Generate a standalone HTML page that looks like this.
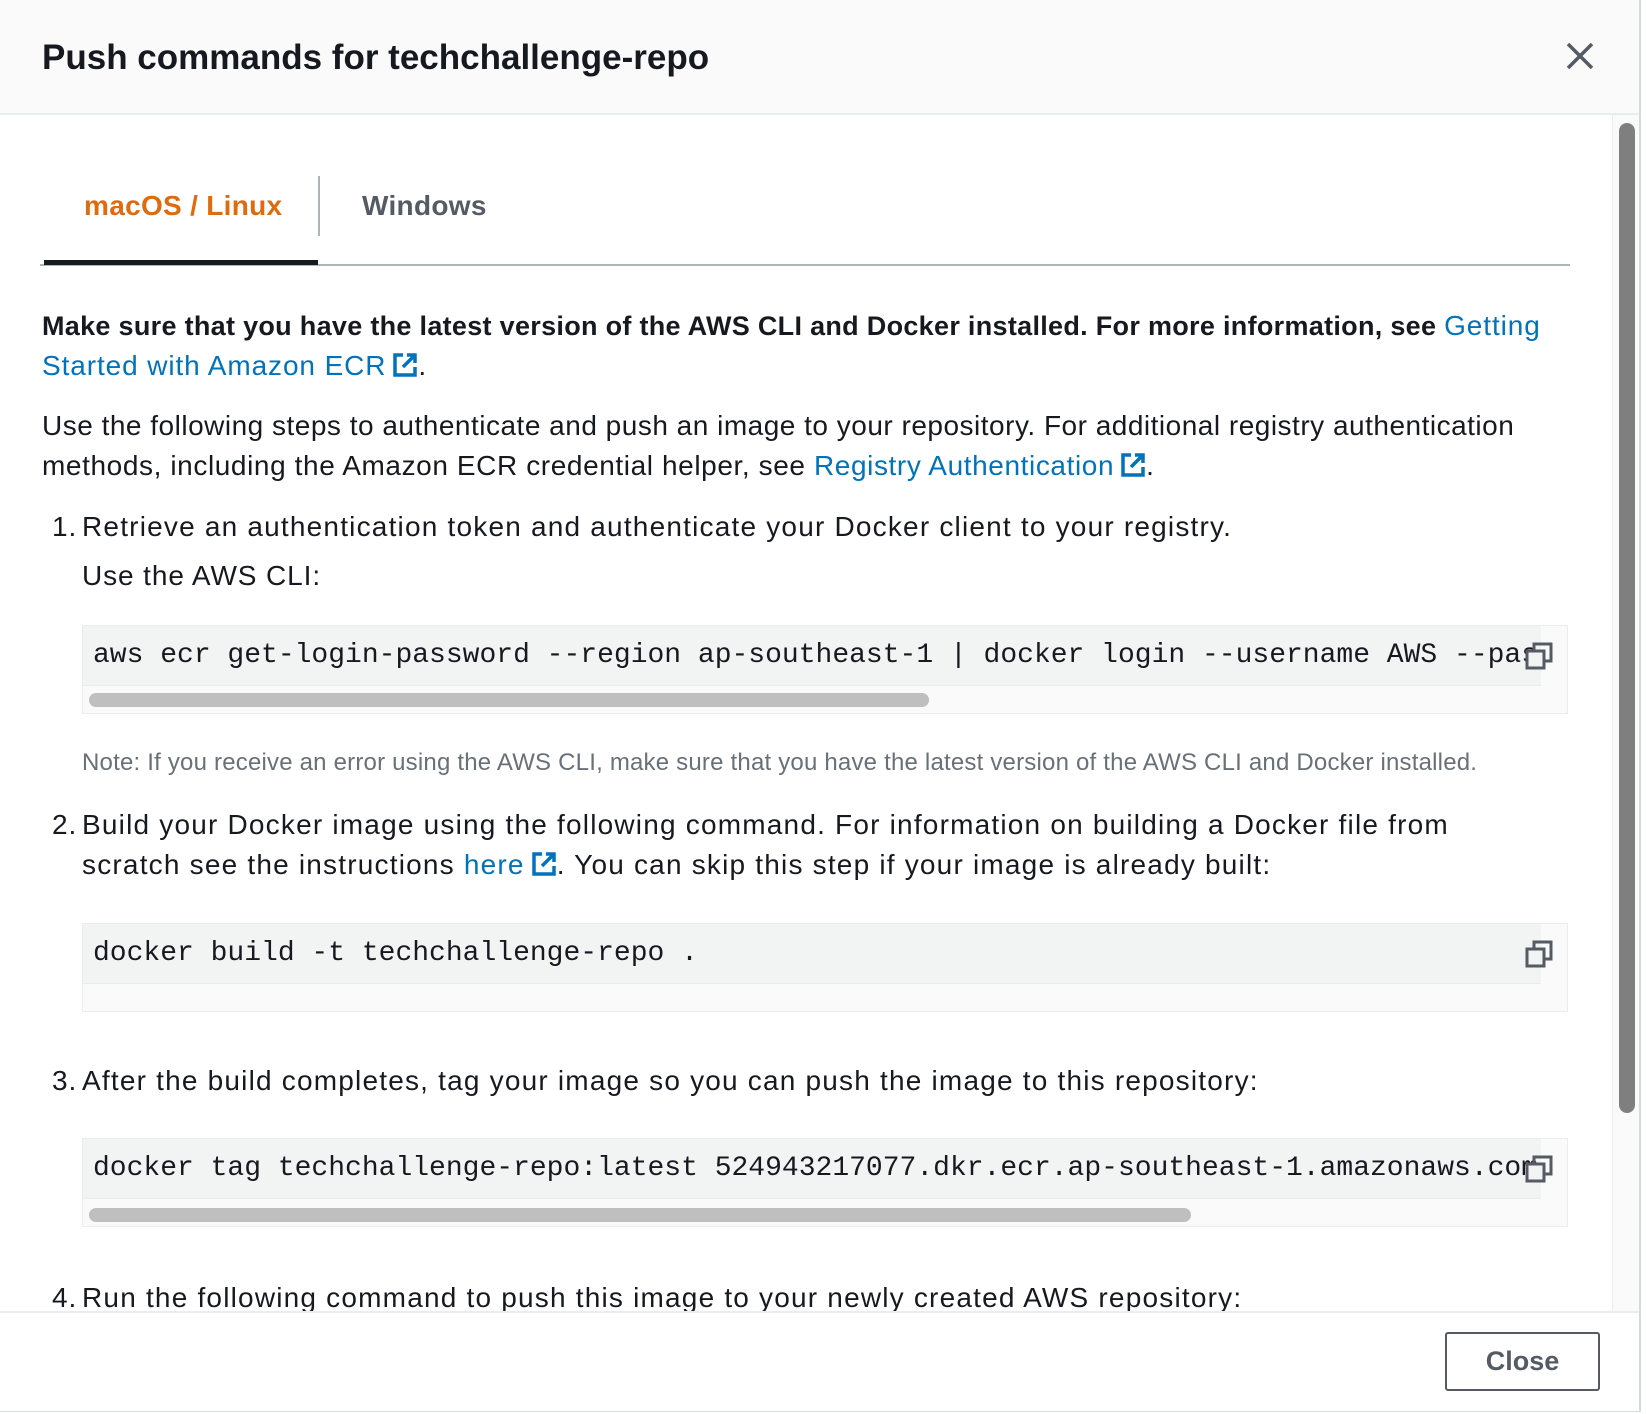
<!DOCTYPE html>
<html><head><meta charset="utf-8"><style>
*{margin:0;padding:0;box-sizing:border-box}
body{width:1646px;height:1414px;background:#fff;font-family:"Liberation Sans",Arial,sans-serif;color:#16191f;position:relative;overflow:hidden}
.modal{position:absolute;left:0;top:0;width:1641px;height:1412px;background:#fff;border-right:2px solid #d5dbdb;border-bottom:2px solid #d5dbdb}
.hdr{position:absolute;left:0;top:0;width:1639px;height:115px;background:#fafafa;border-bottom:2px solid #eaeded}
.t{position:absolute;white-space:nowrap;line-height:40px}
.title{left:42px;top:38px;font-size:35px;font-weight:bold}
.body{position:absolute;left:0;top:115px;width:1639px;height:1196px;overflow:hidden}
.body .t{font-size:28px;letter-spacing:0.9px}
.body .b{font-size:27px;letter-spacing:0.3px;font-weight:bold}
a{color:#0073bb;text-decoration:none}
.ext{display:inline-block;width:26px;height:26px;vertical-align:-3px;margin-left:6px}
.code{position:absolute;left:82px;width:1486px;background:#fafafa;border:1px solid #eaeded}
.code .in{position:absolute;left:0;top:0;width:1458px;height:60px;background:#f2f3f3;border-bottom:1px solid #eaeded;overflow:hidden}
.code .tx{position:absolute;left:10px;top:10px;font-family:"Liberation Mono","DejaVu Sans Mono",monospace;font-size:28px;line-height:40px;white-space:nowrap;color:#16191f}
.copy{position:absolute;left:1442px;top:16px;width:28px;height:28px}
.thumb{position:absolute;left:6px;height:14px;background:#bfbfbf;border-radius:7px}
.vs{position:absolute;left:1612px;top:115px;width:27px;height:1196px;background:#fafafa;border-left:1px solid #eaeded}
.vs div{position:absolute;left:6px;top:8px;width:16px;height:990px;background:#7f7f7f;border-radius:8px}
.ftr{position:absolute;left:0;top:1311px;width:1639px;height:100px;border-top:2px solid #eaeded;background:#fff}
.btn{position:absolute;left:1445px;top:19px;width:155px;height:59px;border:2px solid #545b64;border-radius:3px;font-weight:bold;font-size:27px;color:#545b64;text-align:center;line-height:55px}
</style></head><body>
<div class="modal">
<div class="hdr">
<div class="t title">Push commands for techchallenge-repo</div>
<svg style="position:absolute;left:1566px;top:42px" width="28" height="28" viewBox="0 0 28 28"><path d="M2 2L26 26M26 2L2 26" stroke="#545b64" stroke-width="3.5"/></svg>
</div>
<div class="body">
<div class="t b" style="left:84px;top:71px;font-size:28px;color:#dd6b10">macOS / Linux</div>
<div style="position:absolute;left:318px;top:61px;width:2px;height:60px;background:#aab7b8"></div>
<div class="t b" style="left:362px;top:71px;font-size:28px;color:#545b64">Windows</div>
<div style="position:absolute;left:40px;top:149px;width:1530px;height:2px;background:#aab7b8"></div>
<div style="position:absolute;left:44px;top:145px;width:274px;height:5px;background:#16191f"></div>

<div class="t b" style="left:42px;top:191px">Make sure that you have the latest version of the AWS CLI and Docker installed. For more information, see <a style="font-weight:normal;letter-spacing:0.9px;font-size:28px">Getting</a></div>
<div class="t" style="left:42px;top:231px"><a>Started with Amazon ECR<svg class="ext" viewBox="0 0 26 26"><path d="M11 3H3V23H23V15" fill="none" stroke="#0073bb" stroke-width="3.5"/><path d="M15 3H23V11M23 3L11 15" fill="none" stroke="#0073bb" stroke-width="3.5"/></svg></a>.</div>

<div class="t" style="left:42px;top:291px;letter-spacing:0.5px">Use the following steps to authenticate and push an image to your repository. For additional registry authentication</div>
<div class="t" style="left:42px;top:331px;letter-spacing:0.6px">methods, including the Amazon ECR credential helper, see <a>Registry Authentication<svg class="ext" viewBox="0 0 26 26"><path d="M11 3H3V23H23V15" fill="none" stroke="#0073bb" stroke-width="3.5"/><path d="M15 3H23V11M23 3L11 15" fill="none" stroke="#0073bb" stroke-width="3.5"/></svg></a>.</div>

<div class="t" style="left:52px;top:392px">1.</div>
<div class="t" style="left:82px;top:392px;letter-spacing:1.2px">Retrieve an authentication token and authenticate your Docker client to your registry.</div>
<div class="t" style="left:82px;top:441px">Use the AWS CLI:</div>
<div class="code" style="top:510px;height:89px"><div class="in"><div class="tx">aws ecr get-login-password --region ap-southeast-1 | docker login --username AWS --password-stdin</div></div>
<svg class="copy" viewBox="0 0 28 28"><rect x="9" y="2" width="17" height="17" fill="none" stroke="#545b64" stroke-width="3"/><rect x="2" y="9" width="17" height="17" fill="#f2f3f3" stroke="#545b64" stroke-width="3"/></svg>
<div class="thumb" style="top:67px;width:840px"></div></div>
<div class="t" style="left:82px;top:628px;font-size:24px;letter-spacing:0.2px;color:#687078">Note: If you receive an error using the AWS CLI, make sure that you have the latest version of the AWS CLI and Docker installed.</div>

<div class="t" style="left:52px;top:690px">2.</div>
<div class="t" style="left:82px;top:690px;letter-spacing:1.2px">Build your Docker image using the following command. For information on building a Docker file from</div>
<div class="t" style="left:82px;top:730px;letter-spacing:1.2px">scratch see the instructions <a>here<svg class="ext" viewBox="0 0 26 26"><path d="M11 3H3V23H23V15" fill="none" stroke="#0073bb" stroke-width="3.5"/><path d="M15 3H23V11M23 3L11 15" fill="none" stroke="#0073bb" stroke-width="3.5"/></svg></a>. You can skip this step if your image is already built:</div>
<div class="code" style="top:808px;height:89px"><div class="in"><div class="tx">docker build -t techchallenge-repo .</div></div>
<svg class="copy" viewBox="0 0 28 28"><rect x="9" y="2" width="17" height="17" fill="none" stroke="#545b64" stroke-width="3"/><rect x="2" y="9" width="17" height="17" fill="#f2f3f3" stroke="#545b64" stroke-width="3"/></svg></div>

<div class="t" style="left:52px;top:946px">3.</div>
<div class="t" style="left:82px;top:946px;letter-spacing:1.2px">After the build completes, tag your image so you can push the image to this repository:</div>
<div class="code" style="top:1023px;height:89px"><div class="in"><div class="tx">docker tag techchallenge-repo:latest 524943217077.dkr.ecr.ap-southeast-1.amazonaws.com/techchallenge-repo:latest</div></div>
<svg class="copy" viewBox="0 0 28 28"><rect x="9" y="2" width="17" height="17" fill="none" stroke="#545b64" stroke-width="3"/><rect x="2" y="9" width="17" height="17" fill="#f2f3f3" stroke="#545b64" stroke-width="3"/></svg>
<div class="thumb" style="top:69px;width:1102px"></div></div>

<div class="t" style="left:52px;top:1163px">4.</div>
<div class="t" style="left:82px;top:1163px;letter-spacing:1.2px">Run the following command to push this image to your newly created AWS repository:</div>
</div>
<div class="vs"><div></div></div>
<div class="ftr"><div class="btn">Close</div></div>
</div>
</body></html>
